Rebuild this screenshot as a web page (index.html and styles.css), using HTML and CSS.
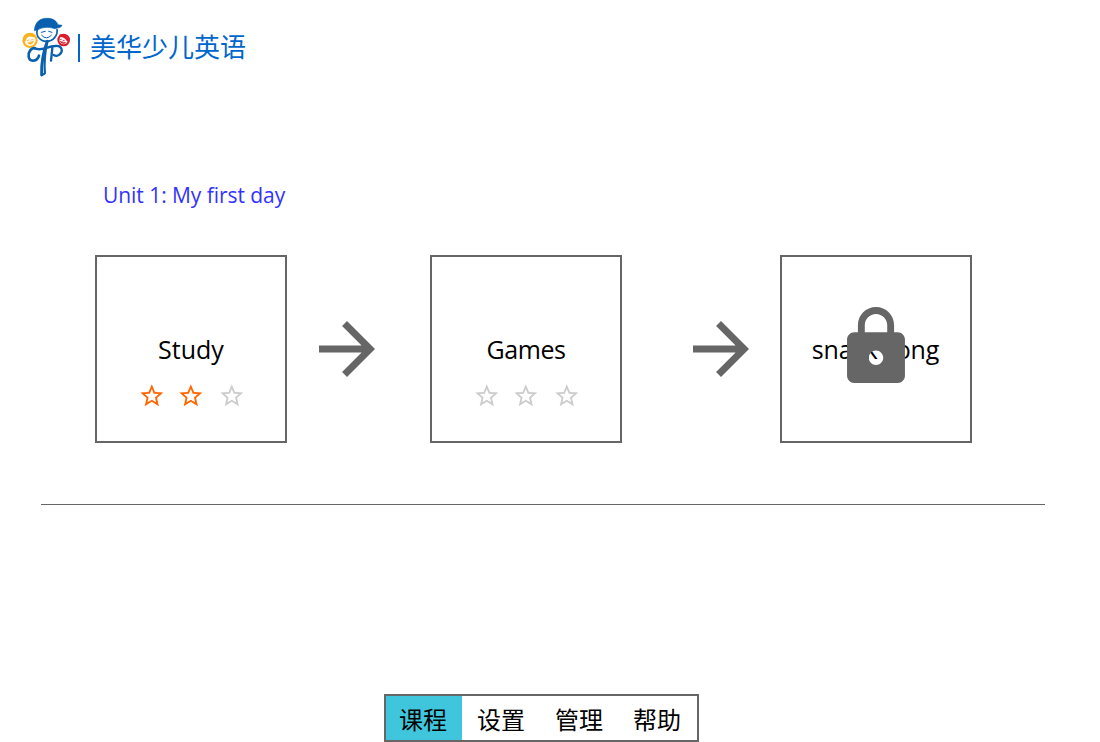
FILE: index.html
```html
<!DOCTYPE html>
<html lang="zh-CN">
<head>
<meta charset="utf-8">
<title>美华少儿英语</title>
<link rel="stylesheet" href="styles.css">
</head>
<body>
<svg class="defs" width="0" height="0">
  <symbol id="star" viewBox="0 0 24 24"><path d="M22 9.24l-7.19-.62L12 2 9.19 8.63 2 9.24l5.46 4.73L5.82 21 12 17.27 18.18 21l-1.63-7.03L22 9.24zM12 15.4l-3.76 2.27 1-4.28-3.32-2.88 4.38-.38L12 6.1l1.71 4.04 4.38.38-3.32 2.88 1 4.28L12 15.4z"/></symbol>
  <symbol id="arrow" viewBox="0 0 16 16"><path d="M8 0L6.59 1.41 12.17 7H0v2h12.17l-5.58 5.59L8 16l8-8z"/></symbol>
</svg>
<header class="header">
  <svg class="logo" viewBox="0 0 210 225">
    <g fill="none" stroke-linecap="round" stroke-linejoin="round">
      <circle cx="45" cy="91" r="20" fill="#fffaf0" stroke="#f9b11c" stroke-width="6"/>
      <path d="M29 92C31 77 44 73 57 79" stroke="#f9b11c" stroke-width="6"/>
      <path d="M39 99Q49 108 55 95Z" fill="#f9b11c" stroke="#f9b11c" stroke-width="2"/>
      <path d="M37 92l5-2M49 90l5-1" stroke="#d99a20" stroke-width="2"/>
      <circle cx="146" cy="90" r="16" fill="#fff5f5" stroke="#dc1b2b" stroke-width="6"/>
      <path d="M137 77Q150 77 159 91" stroke="#dc1b2b" stroke-width="8"/>
      <path d="M136 95Q143 104 151 99Z" fill="#dc1b2b" stroke="#dc1b2b" stroke-width="2"/>
      <path d="M135 89l4-1M144 91l4 1" stroke="#8b1a25" stroke-width="2"/>
      <path d="M67 59C61 79 77 94 94 94C113 94 129 78 126 59" fill="#fff" stroke="#0860ae" stroke-width="5"/>
      <path d="M58 61C61 34 76 24 99 25C119 26 127 37 128 44L141 46C138 54 130 53 119 56C99 49 78 52 68 60Z" fill="#0860ae" stroke="#0860ae" stroke-width="2"/>
      <path d="M79 67L91 64M101 64L111 67M80 76Q94 92 109 76" stroke="#0860ae" stroke-width="3"/>
      <path d="M60 115C49 111 39 127 41 140C44 158 67 155 72 137" stroke="#0860ae" stroke-width="8"/>
      <path d="M59 115C77 125 95 110 120 108C141 105 146 123 133 134C128 138 121 138 116 135" stroke="#0860ae" stroke-width="7"/>
      <path d="M97 94C85 125 79 159 80 194" stroke="#0860ae" stroke-width="9"/>
      <path d="M97 94C90 128 87 158 90 190L80 196" stroke="#0860ae" stroke-width="6"/>
      <path d="M112 114L108 152" stroke="#0860ae" stroke-width="7"/>
    </g>
  </svg>
  <span class="divider"></span>
  <h1 class="brand">美华少儿英语</h1>
</header>
<main class="main">
  <h2 class="unit">Unit 1: My first day</h2>
  <div class="steps">
    <section class="card">
      <div class="title study">Study</div>
      <div class="stars"><svg class="star on"><use href="#star"/></svg><svg class="star on"><use href="#star"/></svg><svg class="star last"><use href="#star"/></svg></div>
    </section>
    <svg class="arrow first"><use href="#arrow"/></svg>
    <section class="card">
      <div class="title games">Games</div>
      <div class="stars"><svg class="star"><use href="#star"/></svg><svg class="star"><use href="#star"/></svg><svg class="star last"><use href="#star"/></svg></div>
    </section>
    <svg class="arrow second"><use href="#arrow"/></svg>
    <section class="card">
      <div class="title song">snack song</div>
      <svg class="lock" viewBox="4 1 16 21"><path d="M18 8h-1V6c0-2.76-2.24-5-5-5S7 3.24 7 6v2H6c-1.1 0-2 .9-2 2v10c0 1.1.9 2 2 2h12c1.1 0 2-.9 2-2V10c0-1.1-.9-2-2-2zm-6 9c-1.1 0-2-.9-2-2s.9-2 2-2 2 .9 2 2-.9 2-2 2zm3.1-9H8.9V6c0-1.71 1.39-3.1 3.1-3.1s3.1 1.39 3.1 3.1v2z"/></svg>
    </section>
  </div>
</main>
<nav class="nav">
  <a class="tab active">课程</a><a class="tab">设置</a><a class="tab">管理</a><a class="tab">帮助</a>
</nav>
</body>
</html>
```
FILE: styles.css
```css
* { box-sizing: border-box; }
body {
  margin: 0;
  height: 742px;
  display: flex;
  flex-direction: column;
  overflow: hidden;
  background: #fff;
  color: #000;
  font-family: "Open Sans", "Noto Sans", "Noto Sans CJK SC", sans-serif;
}
.defs { position: absolute; }
h1, h2 { margin: 0; font-weight: 400; }
.header { display: flex; height: 85px; padding: 10px 0 0 15px; }
.logo { flex: none; width: 70px; height: 75px; margin-right: -7px; }
.divider { width: 2px; height: 28px; margin-top: 24px; background: #0066cc; }
.brand {
  margin: 16px 0 0 10px;
  font-family: "Noto Sans CJK SC", sans-serif;
  font-size: 26px;
  line-height: 40px;
  color: #0066cc;
}
.main {
  height: 420px;
  margin: 0 55px 0 41px;
  padding: 94px 0 0 54px;
  border-bottom: 1px solid #666;
}
.unit { padding-left: 8px; font-size: 21px; line-height: 32px; letter-spacing: -0.05px; color: #3333ff; white-space: nowrap; }
.steps { display: flex; align-items: center; margin-top: 44px; }
.card {
  position: relative;
  flex: none;
  width: 192px;
  height: 188px;
  padding-top: 74px;
  border: 2px solid #666;
}
.title { font-size: 25px; line-height: 36px; text-align: center; white-space: nowrap; }
.games { letter-spacing: -0.4px; }
.song { letter-spacing: -0.1px; padding-right: 1px; }
.stars { display: flex; justify-content: center; margin-top: 15px; padding-left: 2px; }
.star { width: 27.6px; height: 27.6px; margin-right: 11.4px; fill: #ccc; }
.star.on { fill: #ff6600; }
.star.last { margin: 0 0 0 2px; }
.arrow { flex: none; width: 56px; height: 56px; fill: #666; }
.arrow.first { margin: 0 55px 0 32px; }
.arrow.second { margin: 0 31px 0 71px; }
.lock { position: absolute; left: 65px; top: 50px; width: 58px; height: 76px; fill: #666; }
.nav {
  display: flex;
  align-self: flex-start;
  width: 315px;
  height: 48px;
  margin: 189px 0 0 384px;
  border: 2px solid #666;
}
.tab {
  width: 78px;
  padding-right: 2px;
  font-family: "Noto Sans CJK SC", sans-serif;
  font-size: 24px;
  line-height: 45px;
  text-align: center;
}
.tab.active { width: 76px; margin-right: 1px; background: #40c6dc; }
```
